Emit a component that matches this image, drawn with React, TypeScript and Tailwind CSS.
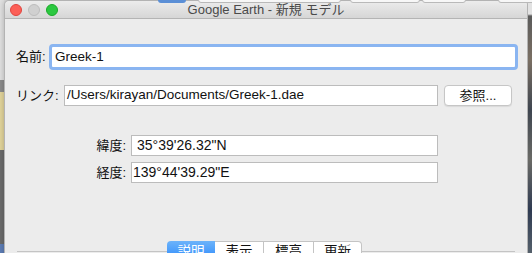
export default function App() {
  const font = { fontFamily: '"Liberation Sans", "Noto Sans CJK JP", sans-serif' };
  return (
    <div className="flex w-[532px] h-[253px] overflow-hidden bg-[#dcdcdc] text-[#111]" style={font}>
      {/* desktop behind, left edge */}
      <div className="flex flex-col w-[4px] shrink-0">
        <div className="h-[80px] bg-[#e2e2e2]" />
        <div className="h-[12px] bg-[#8c8c8c]" />
        <div className="h-[58px] bg-[#e4d69c]" />
        <div className="h-[94px] bg-[#6c6c6c]" />
        <div className="h-[9px] bg-[#5f7fb8]" />
      </div>

      <div className="flex flex-col w-[524px] shrink-0">
        {/* toolbar peeking above */}
        <div className="relative h-[4px] bg-[#e9e9e9]">
          <div className="absolute left-[154px] top-[-3px] w-[28px] h-[6px] rounded-b-[3px] bg-[#5b8fd6]" />
          <div className="absolute left-[194px] top-[-3px] w-[143px] h-[6px] rounded-b-[3px] border border-[#b9b9b9] bg-[#f7f7f7]" />
          <div className="absolute left-[346px] top-[-3px] w-[70px] h-[6px] rounded-b-[3px] border border-[#b9b9b9] bg-[#f7f7f7]" />
          <div className="absolute left-[418px] top-[-3px] w-[44px] h-[6px] rounded-b-[3px] border border-[#b9b9b9] bg-[#f7f7f7]" />
          <div className="absolute left-[494px] top-[-3px] w-[40px] h-[6px] rounded-b-[3px] border border-[#b9b9b9] bg-[#f7f7f7]" />
        </div>

        {/* window */}
        <div className="flex flex-col flex-1 bg-[#ececec] rounded-t-[5px] border-x border-t border-[#b3b3b3] shadow-[0_0_6px_rgba(0,0,0,0.25)]">
          {/* title bar */}
          <div className="grid grid-cols-[1fr_auto_1fr] items-center h-[18px] rounded-t-[5px] bg-gradient-to-b from-[#ececec] to-[#d6d6d6] border-b border-[#b4b4b4]">
            <div className="flex items-center gap-[5px] pl-[5px]">
              <span className="w-[12px] h-[12px] rounded-full bg-[#fc5f57] border border-[#e0443e]" />
              <span className="w-[12px] h-[12px] rounded-full bg-[#d0d0d0] border border-[#bdbdbd] ml-[1px]" />
              <span className="w-[12px] h-[12px] rounded-full bg-[#2bc840] border border-[#1aab29] ml-[1px]" />
            </div>
            <div className="text-[13px] leading-none text-[#4a4a4a]">Google Earth - 新規 モデル</div>
            <div />
          </div>

          {/* name */}
          <div className="flex items-center mt-[25px] h-[26px]">
            <div className="w-[44px] pl-[11px] text-[13px] whitespace-nowrap">名前:</div>
            <div className="flex items-center w-[469px] h-[26px] rounded-[4px] border-[3px] border-[#8ab5f1] bg-white pl-[3px] text-[13.5px]">
              Greek-1
            </div>
          </div>

          {/* link */}
          <div className="flex items-center mt-[15px] h-[21px]">
            <div className="w-[59px] pl-[11px] text-[13px] whitespace-nowrap">リンク:</div>
            <div className="flex items-center w-[374px] h-[21px] border border-[#bcbcbc] bg-white pl-[2px] text-[13.5px] whitespace-nowrap overflow-hidden">
              /Users/kirayan/Documents/Greek-1.dae
            </div>
            <div className="flex items-center justify-center ml-[6px] w-[68px] h-[21px] rounded-[4px] border border-[#c6c6c6] bg-white shadow-[0_1px_1px_rgba(0,0,0,0.08)] text-[13px]">
              参照...
            </div>
          </div>

          {/* latitude */}
          <div className="flex items-center mt-[29px] h-[21px]">
            <div className="w-[126px] pr-[5px] text-right text-[13px]">緯度:</div>
            <div className="flex items-center w-[307px] h-[21px] border border-[#bcbcbc] bg-white pl-[5px] text-[14px]">
              35°39'26.32"N
            </div>
          </div>

          {/* longitude */}
          <div className="flex items-center mt-[6px] h-[21px]">
            <div className="w-[126px] pr-[5px] text-right text-[13px]">経度:</div>
            <div className="flex items-center w-[307px] h-[21px] border border-[#bcbcbc] bg-white pl-[1px] text-[14px]">
              139°44'39.29"E
            </div>
          </div>

          {/* tabs */}
          <div className="flex items-start mt-[58px] ml-[12px] w-[498px]">
            <div className="w-[150px] h-[11px] border-b border-[#c4c4c4]" />
            <div className="flex h-[22px] text-[13.5px]">
              <div className="flex items-center justify-center w-[48px] rounded-l-[4px] bg-gradient-to-b from-[#6cb3fa] to-[#1b83fb] text-white">説明</div>
              <div className="flex items-center justify-center w-[49px] border-y border-r border-[#c4c4c4] bg-white">表示</div>
              <div className="flex items-center justify-center w-[50px] border-y border-r border-[#c4c4c4] bg-white">標高</div>
              <div className="flex items-center justify-center w-[48px] border-y border-r border-[#c4c4c4] rounded-r-[4px] bg-white">更新</div>
            </div>
            <div className="flex-1 h-[11px] border-b border-[#c4c4c4]" />
          </div>
        </div>
      </div>

      {/* desktop behind, right edge (map) */}
      <div className="w-[4px] shrink-0 bg-[linear-gradient(180deg,#e2e2e2_0px,#e2e2e2_14px,#5b5b5b_16px,#7a6f63_60px,#3f4650_110px,#6a6a66_160px,#2f3b52_210px,#55606b_253px)]" />
    </div>
  );
}
